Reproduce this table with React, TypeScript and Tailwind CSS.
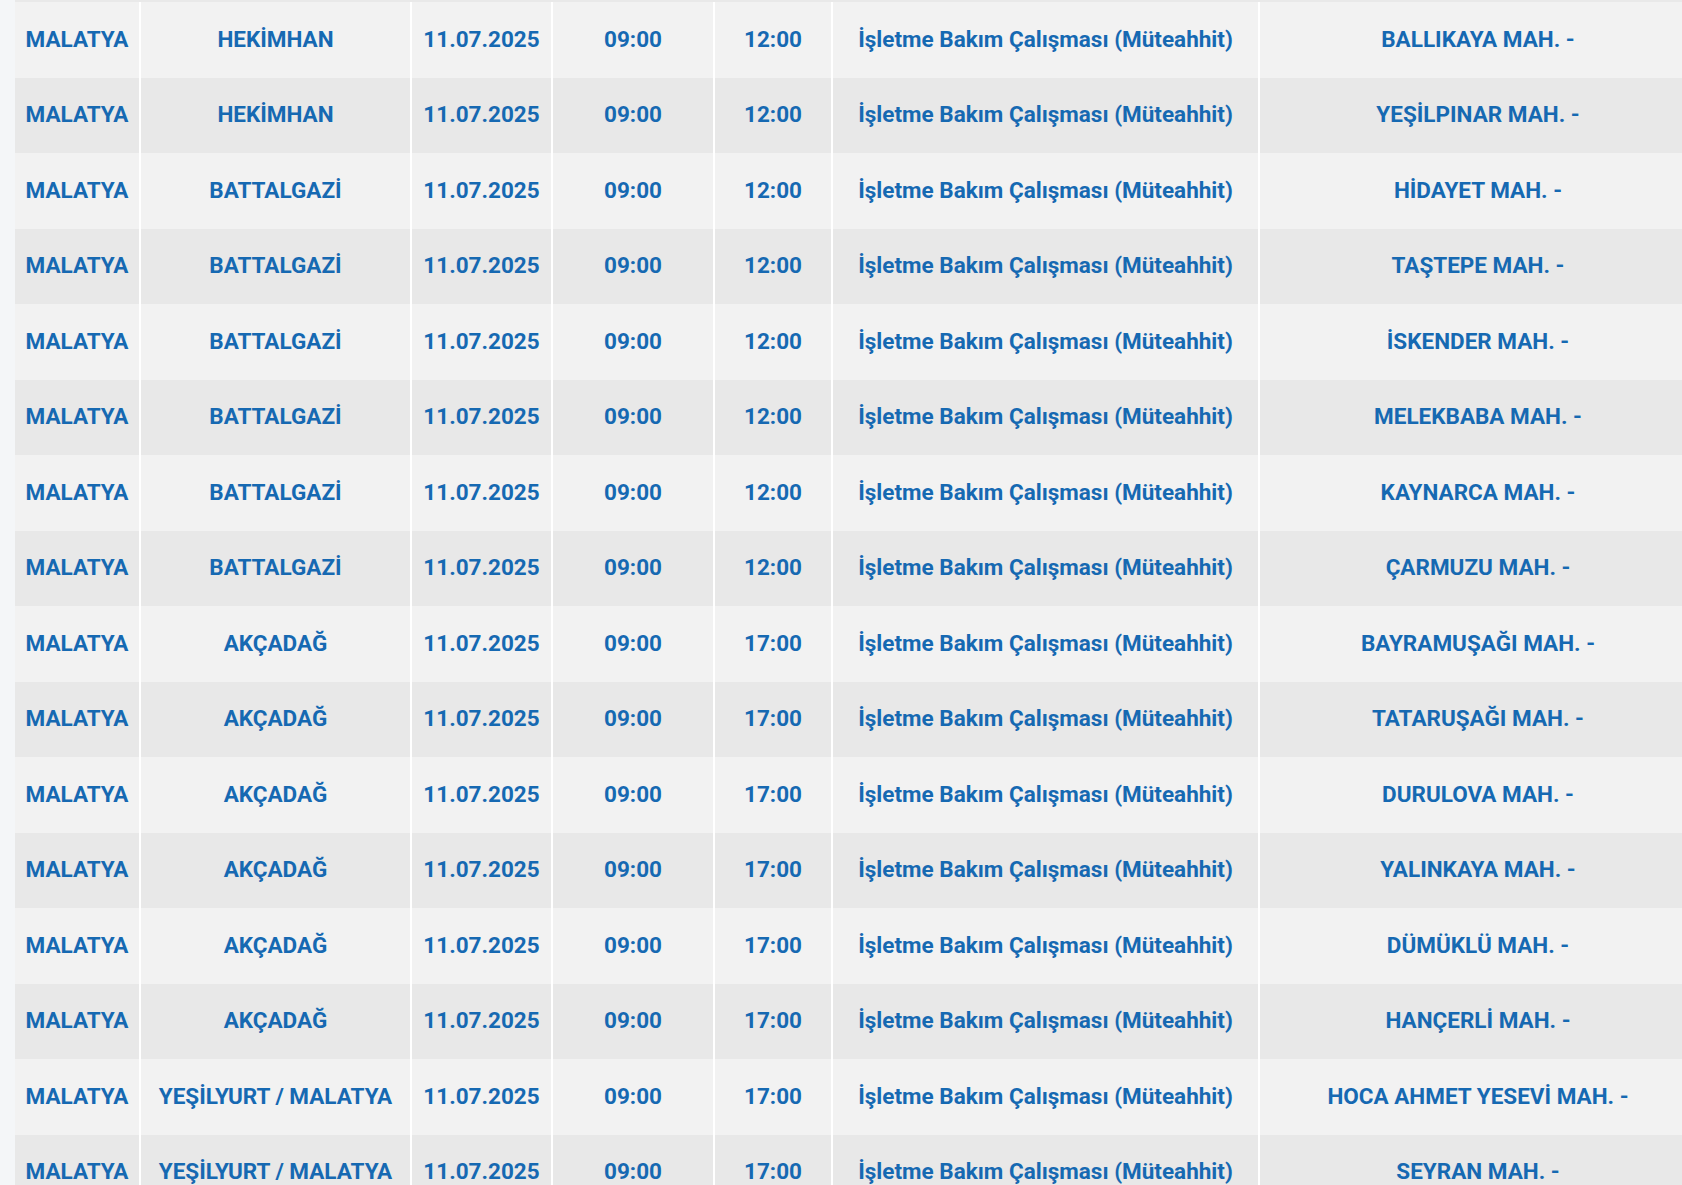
const rows: [string, string, string][] = [
  ["HEKİMHAN", "12:00", "BALLIKAYA MAH. -"],
  ["HEKİMHAN", "12:00", "YEŞİLPINAR MAH. -"],
  ["BATTALGAZİ", "12:00", "HİDAYET MAH. -"],
  ["BATTALGAZİ", "12:00", "TAŞTEPE MAH. -"],
  ["BATTALGAZİ", "12:00", "İSKENDER MAH. -"],
  ["BATTALGAZİ", "12:00", "MELEKBABA MAH. -"],
  ["BATTALGAZİ", "12:00", "KAYNARCA MAH. -"],
  ["BATTALGAZİ", "12:00", "ÇARMUZU MAH. -"],
  ["AKÇADAĞ", "17:00", "BAYRAMUŞAĞI MAH. -"],
  ["AKÇADAĞ", "17:00", "TATARUŞAĞI MAH. -"],
  ["AKÇADAĞ", "17:00", "DURULOVA MAH. -"],
  ["AKÇADAĞ", "17:00", "YALINKAYA MAH. -"],
  ["AKÇADAĞ", "17:00", "DÜMÜKLÜ MAH. -"],
  ["AKÇADAĞ", "17:00", "HANÇERLİ MAH. -"],
  ["YEŞİLYURT / MALATYA", "17:00", "HOCA AHMET YESEVİ MAH. -"],
  ["YEŞİLYURT / MALATYA", "17:00", "SEYRAN MAH. -"],
]

const Cell = ({ w, children }: { w: string; children?: React.ReactNode }) => (
  <div className={`${w} flex shrink-0 items-center justify-center border-r-2 border-white whitespace-nowrap`}>
    {children}
  </div>
)

export default function App() {
  return (
    <div className="relative h-[1185px] w-[1682px] overflow-hidden bg-[#f4f6f8] pl-[15px] font-['Roboto',sans-serif] text-[22.5px] font-bold text-[#1669b2]">
      <div className="h-[2px] w-[1700px] bg-[#e9e9e9]" />
      {rows.map(([district, end, hood], i) => (
        <div
          key={i}
          className={`flex h-[75.5px] w-[1700px] ${i % 2 === 0 ? "bg-[#f2f2f2]" : "bg-[#e8e8e8]"}`}
        >
          <Cell w="w-[126px]">MALATYA</Cell>
          <Cell w="w-[271px]">{district}</Cell>
          <Cell w="w-[141px]">11.07.2025</Cell>
          <Cell w="w-[162px]">09:00</Cell>
          <Cell w="w-[118px]">{end}</Cell>
          <Cell w="w-[427px]">İşletme Bakım Çalışması (Müteahhit)</Cell>
          <div className="flex w-[436px] shrink-0 items-center justify-center whitespace-nowrap">{hood}</div>
        </div>
      ))}
      <div className="absolute left-[1510px] top-[1176px] whitespace-nowrap font-['Open_Sans',sans-serif] text-[26px] font-normal text-[#bcbcbc]">
        Windows'u Etkinleştir
      </div>
    </div>
  )
}
